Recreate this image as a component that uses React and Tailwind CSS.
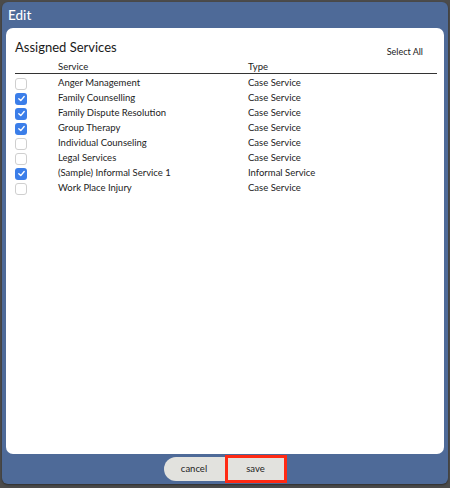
const services = [
  { name: "Anger Management", type: "Case Service", checked: false },
  { name: "Family Counselling", type: "Case Service", checked: true },
  { name: "Family Dispute Resolution", type: "Case Service", checked: true },
  { name: "Group Therapy", type: "Case Service", checked: true },
  { name: "Individual Counseling", type: "Case Service", checked: false },
  { name: "Legal Services", type: "Case Service", checked: false },
  { name: "(Sample) Informal Service 1", type: "Informal Service", checked: true },
  { name: "Work Place Injury", type: "Case Service", checked: false },
];

function Check({ checked }) {
  if (checked) {
    return (
      <div className="flex h-[12px] w-[12px] items-center justify-center rounded-[3px] bg-[#3b7ee9]">
        <svg width="9" height="9" viewBox="0 0 10 10">
          <path d="M2 5.2 L4.2 7.3 L8 2.8" fill="none" stroke="white" strokeWidth="1.5" strokeLinecap="round" strokeLinejoin="round" />
        </svg>
      </div>
    );
  }
  return <div className="h-[12px] w-[12px] rounded-[3px] border border-[#cfcfcf] bg-white" />;
}

export default function App() {
  return (
    <div
      className="flex h-[488px] w-[450px] bg-[#4b4b4b] px-[2px] pt-[2px] pb-[4px]"
      style={{ fontFamily: "Lato, 'Noto Sans', sans-serif" }}
    >
      <div className="flex flex-1 flex-col rounded-[6px] bg-[#4e6a98] shadow-[0_1px_2px_rgba(0,0,0,0.4)]">
        <div className="flex h-[26px] items-center px-[6px] pt-[1px] text-[13.5px] font-medium text-white">Edit</div>
        <div className="mx-[4px] flex-1 rounded-[7px] bg-white pl-[9px] pr-[7px] pt-[11px]">
          <div className="flex items-start justify-between">
            <div className="text-[13px] leading-[16px] text-[#1a1a1a]">Assigned Services</div>
            <div className="mr-[14px] mt-[7px] text-[9px] leading-[12px] text-[#222]">Select All</div>
          </div>
          <div className="mt-[4px] flex h-[12px] items-center border-b border-[#333] pb-[1px] text-[9.5px] text-[#222]">
            <div className="w-[43px]" />
            <div className="w-[190px]">Service</div>
            <div>Type</div>
          </div>
          <div className="pt-[2px]">
            {services.map((s) => (
              <div key={s.name} className="flex h-[15px] items-center text-[9.5px] text-[#222]">
                <div className="w-[43px]">
                  <Check checked={s.checked} />
                </div>
                <div className="w-[190px]">{s.name}</div>
                <div>{s.type}</div>
              </div>
            ))}
          </div>
        </div>
        <div className="flex h-[30px] items-start justify-center pt-[1px]">
          <button className="mt-[2px] h-[24px] w-[61px] rounded-l-full bg-[#e2e2de] text-[9.5px] text-[#222]">cancel</button>
          <button className="h-[28px] w-[62px] border-[3px] border-[#ff2a14] bg-[#e2e2de] text-[9.5px] text-[#222]">save</button>
        </div>
      </div>
    </div>
  );
}
